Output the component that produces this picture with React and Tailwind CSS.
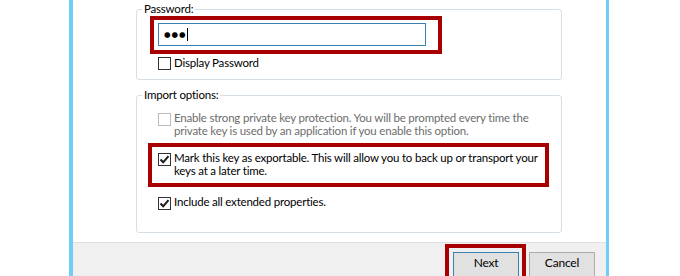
function CheckBox({ checked, disabled }) {
  return (
    <span
      className={`w-[13px] h-[13px] shrink-0 border bg-white flex items-center justify-center ${
        disabled ? 'border-[#bcbcbc]' : 'border-[#333333]'
      }`}
    >
      {checked && (
        <svg width="11" height="11" viewBox="0 0 11 11" fill="none">
          <path d="M1.5 5.5 L4.2 8.3 L9.5 2.2" stroke="#1a1a1a" strokeWidth="2" />
        </svg>
      )}
    </span>
  )
}

function Row({ checked, disabled, children, className = '' }) {
  return (
    <div className={`flex items-start gap-[3px] ${className}`}>
      <span className="mt-[2px]">
        <CheckBox checked={checked} disabled={disabled} />
      </span>
      <p className={`leading-[13px] whitespace-nowrap ${disabled ? 'text-[#6d6d6d]' : 'text-black'}`}>{children}</p>
    </div>
  )
}

export default function App() {
  return (
    <div className="w-[680px] h-[276px] flex bg-white overflow-hidden font-['Lato',sans-serif] text-[11.5px] tracking-[-0.2px] text-black">
      <div className="w-[69px]" />
      <div className="w-[4px] bg-[#6dcff6]" />

      <div className="w-[533px] flex flex-col">
        <div className="flex-1 pl-[63px] pt-[2px]">
          <fieldset className="w-[426px] h-[78px] border border-[#d5dfe5] rounded-[3px]">
            <legend className="ml-[5px] px-[2px] leading-[14px]">Password:</legend>
            <div className="ml-[13px] w-[292px] h-[38px] border-4 border-[#a80000] pl-[4px] pt-[3px]">
              <div className="w-[268px] h-[23px] border border-[#3c7fb1] flex items-center pl-[5px]">
                <span className="font-['DejaVu_Sans'] text-[7.5px] tracking-[1px] leading-none">●●●</span>
                <span className="w-[1px] h-[13px] bg-black" />
              </div>
            </div>
            <div className="ml-[21px] mt-[2px] flex items-center gap-[3px]">
              <CheckBox />
              <span className="leading-[14px]">Display Password</span>
            </div>
          </fieldset>

          <fieldset className="mt-[8px] w-[426px] h-[145px] border border-[#d5dfe5] rounded-[3px]">
            <legend className="ml-[5px] px-[2px] leading-[14px]">Import options:</legend>
            <Row disabled className="ml-[21px] mt-[9px]">
              Enable strong private key protection. You will be prompted every time the
              <br />
              private key is used by an application if you enable this option.
            </Row>
            <div className="ml-[11px] mt-[6px] w-[401px] h-[44px] border-4 border-[#a80000] pl-[6px] pt-[4px]">
              <Row checked>
                Mark this key as exportable. This will allow you to back up or transport your
                <br />
                keys at a later time.
              </Row>
            </div>
            <Row checked className="ml-[21px] mt-[8px]">
              Include all extended properties.
            </Row>
          </fieldset>
        </div>

        <div className="h-[34px] border-t border-[#dfdfdf] bg-[#f0f0f0] flex justify-end items-start gap-[3px] pr-[11px] pt-[1px]">
          <div className="w-[81px] h-[40px] border-4 border-[#a80000] pl-[4px] pt-[4px]">
            <button className="w-[66px] h-[26px] border border-[#3c7fb1] bg-[#e1e1e1] flex justify-center pt-[2px] leading-[16px] text-[12px]">
              Next
            </button>
          </div>
          <button className="mt-[8px] w-[66px] h-[26px] border border-[#adadad] bg-[#e1e1e1] flex justify-center pt-[2px] leading-[16px] text-[12px]">
            Cancel
          </button>
        </div>
      </div>

      <div className="w-[3px] bg-[#6dcff6]" />
      <div className="flex-1" />
    </div>
  )
}
